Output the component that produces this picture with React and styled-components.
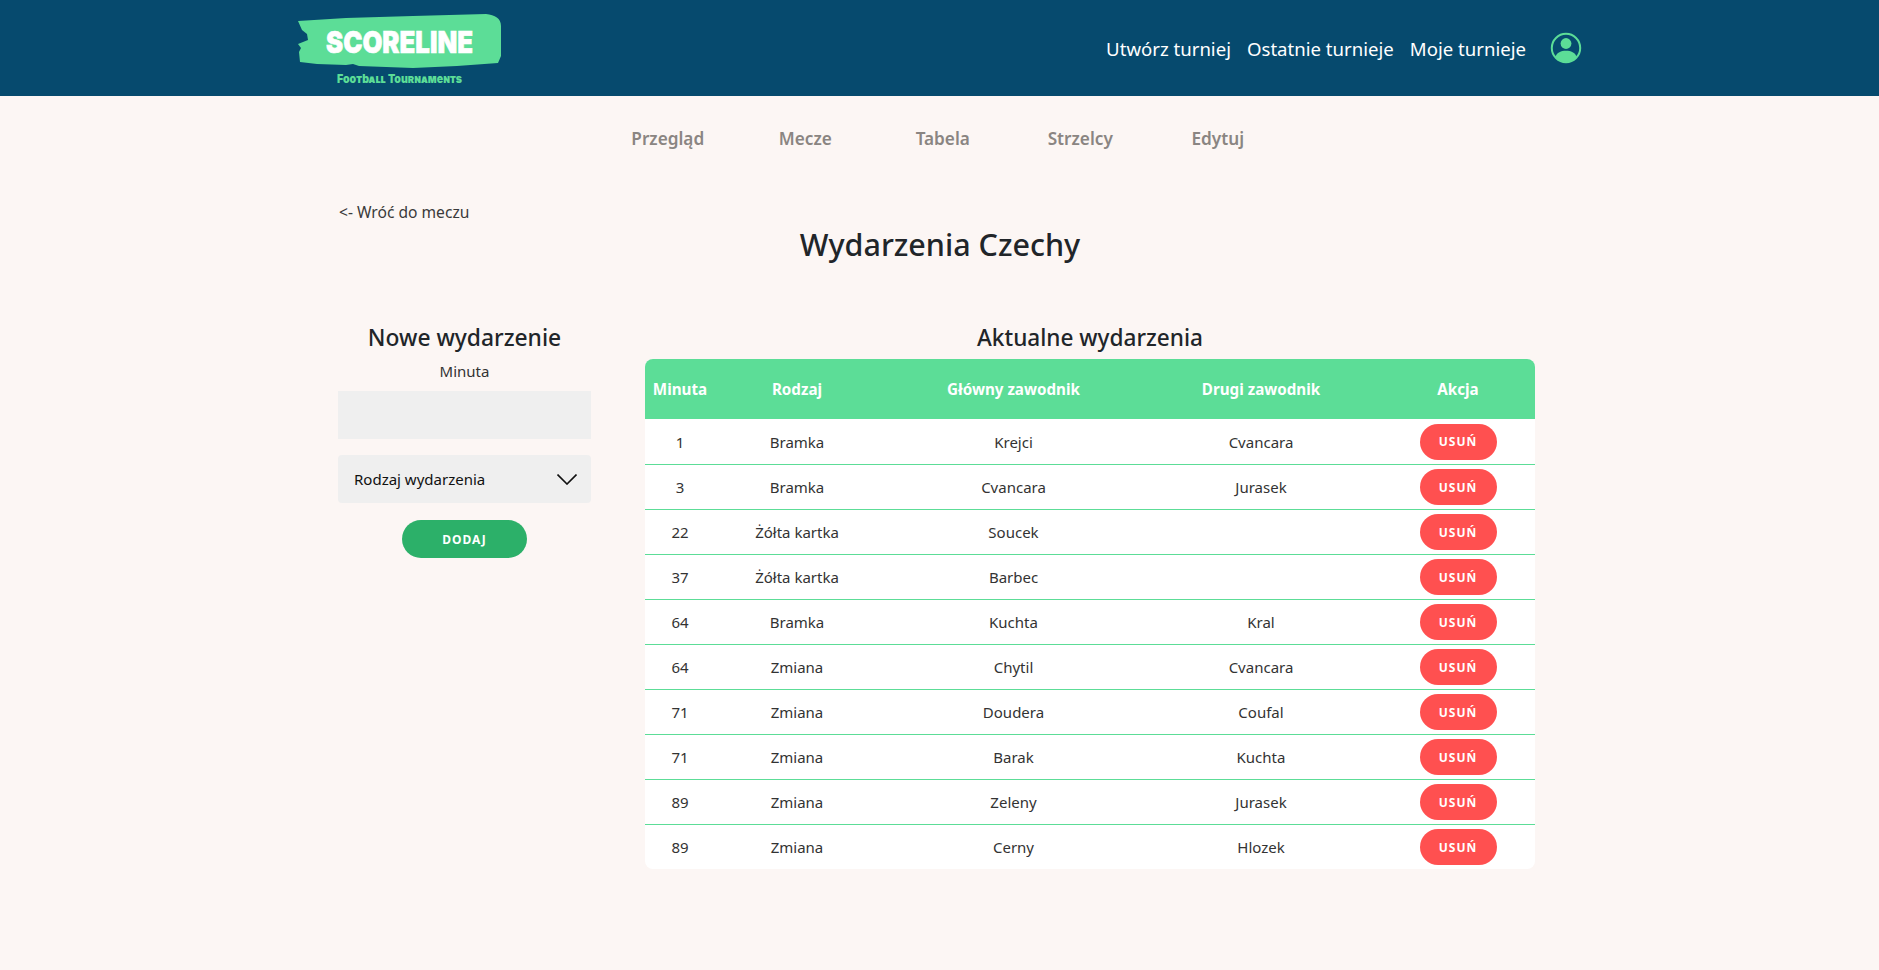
import React from 'react'
import styled, { createGlobalStyle } from 'styled-components'

const events = [
	{ minute: 1, type: 'Bramka', main: 'Krejci', second: 'Cvancara' },
	{ minute: 3, type: 'Bramka', main: 'Cvancara', second: 'Jurasek' },
	{ minute: 22, type: 'Żółta kartka', main: 'Soucek', second: '' },
	{ minute: 37, type: 'Żółta kartka', main: 'Barbec', second: '' },
	{ minute: 64, type: 'Bramka', main: 'Kuchta', second: 'Kral' },
	{ minute: 64, type: 'Zmiana', main: 'Chytil', second: 'Cvancara' },
	{ minute: 71, type: 'Zmiana', main: 'Doudera', second: 'Coufal' },
	{ minute: 71, type: 'Zmiana', main: 'Barak', second: 'Kuchta' },
	{ minute: 89, type: 'Zmiana', main: 'Zeleny', second: 'Jurasek' },
	{ minute: 89, type: 'Zmiana', main: 'Cerny', second: 'Hlozek' },
]

const tabs = ['Przegląd', 'Mecze', 'Tabela', 'Strzelcy', 'Edytuj']
const navLinks = ['Utwórz turniej', 'Ostatnie turnieje', 'Moje turnieje']

function Logo() {
	return (
		<svg width='206' height='72' viewBox='0 0 206 72'>
			<path
				fill='#5cdd97'
				d='M1 7 L49 4 L116 2 L189 0 C198 1 204 4 204 12 L204 42 L201 49 L160 52 L116 54 L62 52 L56 50 L49 51 L20 50 L3 48 L2 38 L4 34 L1 30 L11 26 L10 20 L5 16 Z'
			/>
			<text
				x='29'
				y='39'
				fill='#fff'
				stroke='#fff'
				strokeWidth='0.6'
				fontFamily='Inter, sans-serif'
				fontWeight='900'
				fontSize='30'
				textLength='147'
				lengthAdjust='spacingAndGlyphs'
			>
				SCORELINE
			</text>
			<text
				x='40'
				y='69'
				fill='#5cdd97'
				fontFamily='Inter, sans-serif'
				fontWeight='900'
				fontSize='12'
				fontVariant='small-caps'
				textLength='125'
				lengthAdjust='spacingAndGlyphs'
			>
				Football Tournaments
			</text>
		</svg>
	)
}

function UserIcon() {
	return (
		<svg width='32' height='32' viewBox='0 0 32 32'>
			<circle cx='16' cy='16' r='14.2' fill='none' stroke='#5cdd97' strokeWidth='2' />
			<circle cx='16' cy='11.5' r='5.4' fill='#5cdd97' />
			<path fill='#5cdd97' d='M5.2 25 C7 20.5 11 18.8 16 18.8 C21 18.8 25 20.5 26.8 25 C24 28.4 20.2 30 16 30 C11.8 30 8 28.4 5.2 25 Z' />
		</svg>
	)
}

function Chevron() {
	return (
		<svg width='20' height='11' viewBox='0 0 20 11'>
			<path d='M0.5 0.5 L10 10 L19.5 0.5' fill='none' stroke='#111' strokeWidth='1.6' />
		</svg>
	)
}

export default function App() {
	return (
		<>
			<GlobalStyle />
			<Header>
				<LogoWrapper>
					<Logo />
				</LogoWrapper>
				<Nav>
					{navLinks.map((link) => (
						<NavLink key={link}>{link}</NavLink>
					))}
					<UserButton>
						<UserIcon />
					</UserButton>
				</Nav>
			</Header>

			<Tabs>
				{tabs.map((tab) => (
					<Tab key={tab}>{tab}</Tab>
				))}
			</Tabs>

			<Main>
				<BackLink>&lt;- Wróć do meczu</BackLink>
				<Title>Wydarzenia Czechy</Title>

				<Columns>
					<Form>
						<Subtitle>Nowe wydarzenie</Subtitle>
						<Label>Minuta</Label>
						<Input />
						<SelectBox>
							<span>Rodzaj wydarzenia</span>
							<Chevron />
						</SelectBox>
						<AddButton>DODAJ</AddButton>
					</Form>

					<TableSection>
						<TableTitle>Aktualne wydarzenia</TableTitle>
						<Table>
							<colgroup>
								<col width='70' />
								<col width='164' />
								<col width='269' />
								<col width='226' />
								<col width='161' />
							</colgroup>
							<thead>
								<tr>
									<Th>Minuta</Th>
									<Th>Rodzaj</Th>
									<Th>Główny zawodnik</Th>
									<Th>Drugi zawodnik</Th>
									<ActionTh>Akcja</ActionTh>
								</tr>
							</thead>
							<tbody>
								{events.map((event, i) => (
									<Row key={i}>
										<Td>{event.minute}</Td>
										<Td>{event.type}</Td>
										<Td>{event.main}</Td>
										<Td>{event.second}</Td>
										<ActionTd>
											<RemoveButton>USUŃ</RemoveButton>
										</ActionTd>
									</Row>
								))}
							</tbody>
						</Table>
					</TableSection>
				</Columns>
			</Main>
		</>
	)
}

const GlobalStyle = createGlobalStyle`
	* {
		box-sizing: border-box;
	}
	body {
		margin: 0;
		min-height: 970px;
		background: #fcf6f4;
		color: #212529;
		font-family: 'Noto Sans', 'Open Sans', sans-serif;
		font-size: 15px;
		overflow: hidden;
	}
`

const Header = styled.header`
	display: flex;
	justify-content: space-between;
	align-items: center;
	height: 96px;
	padding: 0 297px;
	background: #064a6e;
`

const LogoWrapper = styled.div`
	display: flex;
	padding-top: 3px;
`

const Nav = styled.nav`
	display: flex;
	align-items: center;
	gap: 16px;
	padding-top: 2px;
`

const NavLink = styled.a`
	color: #fff;
	font-size: 18.6px;
	line-height: 26px;
`

const UserButton = styled.div`
	display: flex;
	margin-left: 8px;
	margin-top: -3px;
`

const Tabs = styled.div`
	display: flex;
	margin-left: 599px;
	padding-top: 31px;
`

const Tab = styled.a`
	width: 137.5px;
	text-align: center;
	color: #8a8582;
	font-size: 17.2px;
	font-weight: 600;
	line-height: 24px;
`

const Main = styled.main`
	display: flex;
	flex-direction: column;
	margin-left: 338px;
	width: 1197px;
	padding-top: 50px;
`

const BackLink = styled.a`
	margin-left: 1px;
	color: #3a3a3a;
	font-size: 15.6px;
	line-height: 22px;
`

const Title = styled.h1`
	margin: 0 0 0 7px;
	text-align: center;
	font-size: 30.5px;
	font-weight: 500;
	line-height: 42px;
`

const Columns = styled.div`
	display: flex;
	gap: 54px;
	margin-top: 56px;
`

const Form = styled.div`
	display: flex;
	flex-direction: column;
	align-items: center;
	width: 253px;
	flex-shrink: 0;
`

const Subtitle = styled.h2`
	margin: 0;
	text-align: center;
	font-size: 22.8px;
	font-weight: 500;
	line-height: 34px;
`

const TableTitle = styled(Subtitle)`
	font-size: 22.6px;
`

const Label = styled.label`
	margin-top: 5px;
	color: #333;
	font-size: 15px;
	line-height: 22px;
`

const Input = styled.input`
	width: 100%;
	height: 48px;
	margin-top: 9px;
	border: none;
	background: #efefef;
`

const SelectBox = styled.div`
	display: flex;
	justify-content: space-between;
	align-items: center;
	width: 100%;
	height: 48px;
	margin-top: 16px;
	padding: 0 14px 0 16px;
	border-radius: 4px;
	background: #efefef;
	color: #111;
	font-size: 15px;
`

const AddButton = styled.button`
	width: 125px;
	height: 38px;
	margin-top: 17px;
	border: none;
	border-radius: 19px;
	background: #2cb069;
	color: #fff;
	font-family: inherit;
	font-size: 12px;
	font-weight: 700;
	letter-spacing: 1px;
`

const TableSection = styled.div`
	flex: 1;
`

const Table = styled.table`
	width: 890px;
	margin-top: 4px;
	border-collapse: separate;
	border-spacing: 0;
	table-layout: fixed;
	border-radius: 8px;
	overflow: hidden;
	background: #fff;
`

const Th = styled.th`
	height: 60px;
	padding: 0;
	background: #5cdd97;
	color: #fff;
	font-size: 15.2px;
	font-weight: 700;
`

const ActionTh = styled(Th)`
	padding-left: 7px;
`

const Row = styled.tr`
	td {
		border-bottom: 1px solid #5cdd97;
	}
	&:first-child td {
		height: 46px;
	}
	&:last-child td {
		height: 44px;
		border-bottom: none;
	}
`

const Td = styled.td`
	height: 45px;
	padding: 0;
	text-align: center;
	color: #333;
	font-size: 15px;
`

const ActionTd = styled(Td)`
	padding-left: 7px;
`

const RemoveButton = styled.button`
	display: block;
	width: 77px;
	height: 36px;
	margin: 0 auto;
	border: none;
	border-radius: 18px;
	background: #ff5050;
	color: #fff;
	font-family: inherit;
	font-size: 12px;
	font-weight: 700;
	letter-spacing: 1px;
`
